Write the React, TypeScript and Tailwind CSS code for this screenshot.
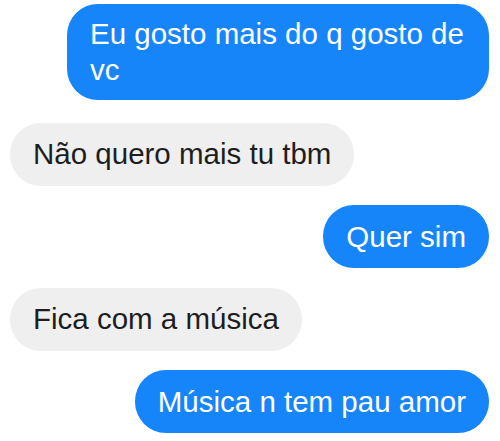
const messages = [
  { text: "Eu gosto mais do q gosto de vc", mine: true },
  { text: "Não quero mais tu tbm", mine: false },
  { text: "Quer sim", mine: true },
  { text: "Fica com a música", mine: false },
  { text: "Música n tem pau amor", mine: true },
];

const App = () => {
  return (
    <div className="w-[500px] h-[441px] bg-white overflow-hidden flex flex-col gap-[19.5px] pt-[4px] pl-[10px] pr-[11px] font-['Liberation_Sans',Arial,sans-serif]">
      {messages.map((m, i) => (
        <div
          key={i}
          className={(m.mine ? "flex justify-end" : "flex justify-start") + (i === 0 ? " mb-[3px]" : "")}
        >
          <div
            className={
              (i === 0 ? "py-[12px] " : "py-[13.5px] ") +
              (m.mine
                ? "max-w-[422px] rounded-[31px] px-[23px] text-[29.5px] leading-[36px] bg-[#1785fa] text-white"
                : "max-w-[422px] rounded-[31px] px-[23px] text-[29.5px] leading-[36px] bg-[#efefef] text-[#1e1e1e]")
            }
          >
            {m.text}
          </div>
        </div>
      ))}
    </div>
  );
};

export default App;
